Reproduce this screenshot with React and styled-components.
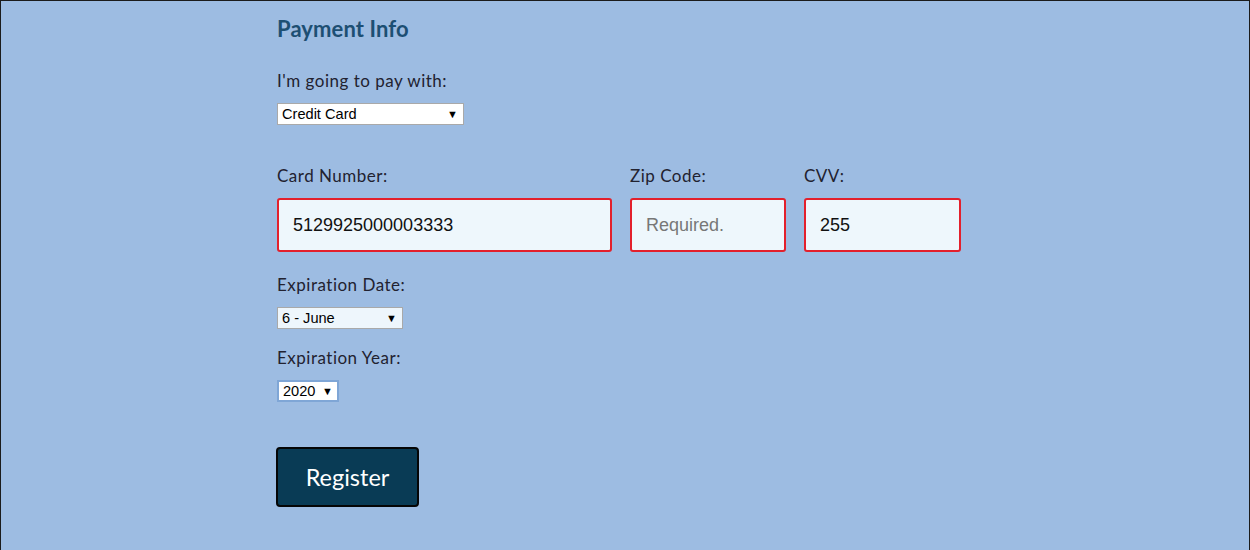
import React, { useState } from 'react';
import styled, { createGlobalStyle } from 'styled-components';

const GlobalStyle = createGlobalStyle`
  html, body {
    margin: 0;
    padding: 0;
    background: #9dbce2;
  }
  body {
    font-family: "Lato", "Open Sans", sans-serif;
  }
`;

const Page = styled.div`
  box-sizing: border-box;
  width: 1250px;
  height: 550px;
  border-top: 1px solid #1b1b1b;
  border-left: 1px solid #1b1b1b;
  border-right: 1px solid #1b1b1b;
  background: #9dbce2;
  padding: 14px 0 0 276px;
`;

const Title = styled.h2`
  margin: 0 0 28px;
  font-family: "Lato", sans-serif;
  font-size: 22px;
  font-weight: 700;
  color: #1d4f73;
  letter-spacing: 0.1px;
`;

const Label = styled.label`
  display: block;
  font-family: "Lato", sans-serif;
  font-size: 17px;
  color: #222230;
  margin-bottom: ${(p) => p.$gap || 10}px;
  letter-spacing: 0.5px;
`;

const Field = styled.div`
  margin-bottom: ${(p) => p.$mb || 0}px;
`;

const SelectWrap = styled.div`
  position: relative;
  display: inline-block;

  &::after {
    content: "▼";
    position: absolute;
    right: 6px;
    top: 4px;
    font-size: 11px;
    color: #000;
    pointer-events: none;
  }
`;

const Select = styled.select`
  appearance: none;
  -webkit-appearance: none;
  box-sizing: border-box;
  width: ${(p) => p.$w}px;
  height: 22px;
  padding: 0 0 0 4px;
  font-family: "Liberation Sans", Arial, sans-serif;
  font-size: 14.6px;
  color: #000;
  background: ${(p) => p.$bg || '#fff'};
  border: ${(p) => p.$bw || 1}px solid ${(p) => p.$border || '#a9a9a9'};
  border-radius: 0;
  outline: none;
`;

const Row = styled.div`
  display: flex;
  gap: 18px;
  margin: 40px 0 22px;
`;

const Input = styled.input`
  box-sizing: border-box;
  width: ${(p) => p.$w}px;
  height: 54px;
  padding: 0 14px;
  font-family: "Liberation Sans", Arial, sans-serif;
  font-size: 18px;
  color: #111;
  background: #eef7fc;
  border: 2px solid #e3202c;
  border-radius: 3px;
  outline: none;

  &::placeholder {
    color: #777;
  }
`;

const Button = styled.button`
  margin-top: 45px;
  margin-left: -1px;
  width: 143px;
  height: 60px;
  font-family: "Lato", sans-serif;
  font-size: 23.5px;
  color: #fff;
  background: #093b55;
  border: 2px solid #050505;
  border-radius: 4px;
  cursor: pointer;
`;

const App = () => {
  const [card, setCard] = useState('5129925000003333');
  const [zip, setZip] = useState('');
  const [cvv, setCvv] = useState('255');

  return (
    <>
      <GlobalStyle />
      <Page>
        <Title>Payment Info</Title>
        <Field>
          <Label htmlFor="payment" $gap={12}>I'm going to pay with:</Label>
          <SelectWrap>
            <Select id="payment" $w={187} defaultValue="credit">
              <option value="select">Select Payment Method</option>
              <option value="credit">Credit Card</option>
              <option value="paypal">PayPal</option>
              <option value="bitcoin">Bitcoin</option>
            </Select>
          </SelectWrap>
        </Field>
        <Row>
          <Field>
            <Label htmlFor="cc-num" $gap={12}>Card Number:</Label>
            <Input id="cc-num" $w={335} value={card} onChange={(e) => setCard(e.target.value)} />
          </Field>
          <Field>
            <Label htmlFor="zip" $gap={12}>Zip Code:</Label>
            <Input id="zip" $w={156} placeholder="Required." value={zip} onChange={(e) => setZip(e.target.value)} />
          </Field>
          <Field>
            <Label htmlFor="cvv" $gap={12}>CVV:</Label>
            <Input id="cvv" $w={157} value={cvv} onChange={(e) => setCvv(e.target.value)} />
          </Field>
        </Row>
        <Field $mb={18}>
          <Label htmlFor="exp-month" $gap={12}>Expiration Date:</Label>
          <SelectWrap>
            <Select id="exp-month" $w={126} $bg="#eef6fc" defaultValue="6">
              <option value="1">1 - January</option>
              <option value="6">6 - June</option>
              <option value="12">12 - December</option>
            </Select>
          </SelectWrap>
        </Field>
        <Field>
          <Label htmlFor="exp-year" $gap={12}>Expiration Year:</Label>
          <SelectWrap>
            <Select id="exp-year" $w={62} $bw={2} $border="#7fa6d6" defaultValue="2020">
              <option value="2020">2020</option>
              <option value="2021">2021</option>
              <option value="2022">2022</option>
            </Select>
          </SelectWrap>
        </Field>
        <Button type="submit">Register</Button>
      </Page>
    </>
  );
};

export default App;
